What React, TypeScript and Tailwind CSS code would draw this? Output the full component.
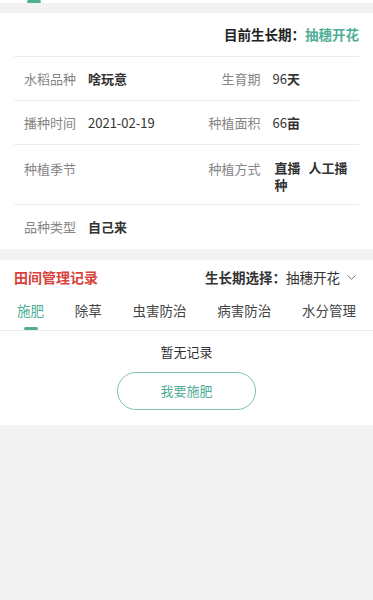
import { ChevronDown } from "lucide-react";

const GREEN = "text-[#4fae96]";

function InfoCell({ label, value, right }: { label: string; value?: React.ReactNode; right?: boolean }) {
  return (
    <div className={`flex items-start ${right ? "" : "pl-[10px]"}`}>
      <span className={`shrink-0 text-[#858585] ${right ? "w-[74px] text-right" : "w-[52px]"}`}>{label}</span>
      <span className="ml-[12px] flex-1 font-semibold text-[#333] leading-[17px] pt-[1px]">{value}</span>
    </div>
  );
}

export default function App() {
  const tabs = ["施肥", "除草", "虫害防治", "病害防治", "水分管理"];

  return (
    <div
      className="min-h-[600px] bg-[#f2f2f2] text-[13px]"
      style={{ fontFamily: '"Noto Sans CJK SC", "Noto Sans", sans-serif' }}
    >
      {/* top tab remnant */}
      <div className="h-[3px] bg-white">
        <div className="ml-[27px] h-[3px] w-[14px] rounded-full bg-[#4fae96]" />
      </div>
      <div className="h-[10px]" />

      {/* basic info card */}
      <section className="bg-white px-[14px]">
        <div className="flex h-[44px] items-center justify-end border-b border-[#ececec] text-[13.5px] font-bold text-[#222]">
          目前生长期：<span className={GREEN}>抽穗开花</span>
        </div>
        <div className="grid h-[44px] grid-cols-2 items-center border-b border-[#ececec]">
          <InfoCell label="水稻品种" value="啥玩意" />
          <InfoCell label="生育期" value={<><span className="font-normal">96</span>天</>} right />
        </div>
        <div className="grid h-[44px] grid-cols-2 items-center border-b border-[#ececec]">
          <div className="flex pl-[10px]">
            <span className="w-[52px] text-[#858585]">播种时间</span>
            <span className="ml-[12px] text-[#333]">2021-02-19</span>
          </div>
          <InfoCell label="种植面积" value={<><span className="font-normal">66</span>亩</>} right />
        </div>
        <div className="grid h-[60px] grid-cols-2 items-start border-b border-[#ececec] pt-[14px]">
          <InfoCell label="种植季节" />
          <div className="flex items-start pr-[4px]">
            <span className="w-[74px] shrink-0 text-right text-[#858585]">种植方式</span>
            <span className="ml-[14px] flex-1 font-semibold leading-[17px] text-[#333] [word-spacing:5px]">
              直播 人工播种
            </span>
          </div>
        </div>
        <div className="grid h-[44px] grid-cols-2 items-center">
          <InfoCell label="品种类型" value="自己来" />
        </div>
      </section>

      <div className="h-[11px]" />

      {/* field management */}
      <section className="bg-white">
        <div className="flex h-[32px] items-center justify-between px-[14px] pt-[2px]">
          <span className="text-[14px] font-bold text-[#d9413a]">田间管理记录</span>
          <span className="flex items-center text-[13.5px] text-[#333]">
            <span className="font-bold">生长期选择：</span>
            抽穗开花
            <ChevronDown className="ml-[4px] h-[15px] w-[15px] text-[#666]" strokeWidth={1.5} />
          </span>
        </div>
        <div className="flex h-[39px] items-end justify-between border-b border-[#ececec] px-[17px]">
          {tabs.map((t, i) => (
            <div key={t} className="flex flex-col items-center">
              <span className={`text-[13.5px] ${i === 0 ? GREEN : "text-[#444]"}`}>{t}</span>
              <span className={`mt-[7px] h-[3px] w-[14px] rounded-full ${i === 0 ? "bg-[#4fae96]" : "bg-transparent"}`} />
            </div>
          ))}
        </div>
        <div className="flex flex-col items-center pb-[15px] pt-[11px]">
          <span className="text-[13px] text-[#333]">暂无记录</span>
          <button className={`mt-[10px] h-[38px] w-[139px] rounded-full border border-[#7ec3b2] text-[13px] ${GREEN}`}>
            我要施肥
          </button>
        </div>
      </section>
    </div>
  );
}
